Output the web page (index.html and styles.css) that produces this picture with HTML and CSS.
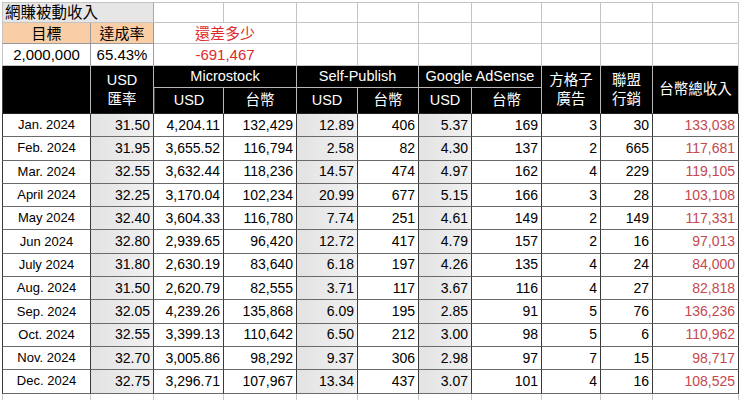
FILE: index.html
```html
<!DOCTYPE html>
<html lang="zh-Hant">
<head>
<meta charset="utf-8">
<link rel="stylesheet" href="styles.css">
</head>
<body>
<table class="sheet">
<colgroup>
<col class="c-a"><col class="c-b"><col class="c-c"><col class="c-d"><col class="c-e"><col class="c-f"><col class="c-g"><col class="c-h"><col class="c-i"><col class="c-j"><col class="c-k">
</colgroup>
<tbody>
<tr class="r-top r-first">
<td colspan="2" class="title">網賺被動收入</td>
<td></td><td></td><td></td><td></td><td></td><td></td><td></td><td></td><td></td>
</tr>
<tr class="r-top r-mid">
<td class="peach">目標</td><td class="peach">達成率</td>
<td colspan="2" class="red">還差多少</td>
<td></td><td></td><td></td><td></td><td></td><td></td><td></td>
</tr>
<tr class="r-top r-mid">
<td class="big">2,000,000</td><td class="big">65.43%</td>
<td colspan="2" class="red">-691,467</td>
<td></td><td></td><td></td><td></td><td></td><td></td><td></td>
</tr>
<tr class="r-head r-ha">
<td rowspan="2"></td>
<td rowspan="2" class="stack"><span>USD</span><span>匯率</span></td>
<td colspan="2">Microstock</td>
<td colspan="2">Self-Publish</td>
<td colspan="2">Google AdSense</td>
<td rowspan="2" class="stack"><span>方格子</span><span>廣告</span></td>
<td rowspan="2" class="stack"><span>聯盟</span><span>行銷</span></td>
<td rowspan="2">台幣總收入</td>
</tr>
<tr class="r-head r-hb">
<td>USD</td><td>台幣</td><td>USD</td><td>台幣</td><td>USD</td><td>台幣</td>
</tr>
<tr class="r-data"><td>Jan. 2024</td><td>31.50</td><td>4,204.11</td><td>132,429</td><td>12.89</td><td>406</td><td>5.37</td><td>169</td><td>3</td><td>30</td><td>133,038</td></tr>
<tr class="r-data"><td>Feb. 2024</td><td>31.95</td><td>3,655.52</td><td>116,794</td><td>2.58</td><td>82</td><td>4.30</td><td>137</td><td>2</td><td>665</td><td>117,681</td></tr>
<tr class="r-data"><td>Mar. 2024</td><td>32.55</td><td>3,632.44</td><td>118,236</td><td>14.57</td><td>474</td><td>4.97</td><td>162</td><td>4</td><td>229</td><td>119,105</td></tr>
<tr class="r-data"><td>April 2024</td><td>32.25</td><td>3,170.04</td><td>102,234</td><td>20.99</td><td>677</td><td>5.15</td><td>166</td><td>3</td><td>28</td><td>103,108</td></tr>
<tr class="r-data"><td>May 2024</td><td>32.40</td><td>3,604.33</td><td>116,780</td><td>7.74</td><td>251</td><td>4.61</td><td>149</td><td>2</td><td>149</td><td>117,331</td></tr>
<tr class="r-data"><td>Jun 2024</td><td>32.80</td><td>2,939.65</td><td>96,420</td><td>12.72</td><td>417</td><td>4.79</td><td>157</td><td>2</td><td>16</td><td>97,013</td></tr>
<tr class="r-data"><td>July 2024</td><td>31.80</td><td>2,630.19</td><td>83,640</td><td>6.18</td><td>197</td><td>4.26</td><td>135</td><td>4</td><td>24</td><td>84,000</td></tr>
<tr class="r-data"><td>Aug. 2024</td><td>31.50</td><td>2,620.79</td><td>82,555</td><td>3.71</td><td>117</td><td>3.67</td><td>116</td><td>4</td><td>27</td><td>82,818</td></tr>
<tr class="r-data"><td>Sep. 2024</td><td>32.05</td><td>4,239.26</td><td>135,868</td><td>6.09</td><td>195</td><td>2.85</td><td>91</td><td>5</td><td>76</td><td>136,236</td></tr>
<tr class="r-data"><td>Oct. 2024</td><td>32.55</td><td>3,399.13</td><td>110,642</td><td>6.50</td><td>212</td><td>3.00</td><td>98</td><td>5</td><td>6</td><td>110,962</td></tr>
<tr class="r-data"><td>Nov. 2024</td><td>32.70</td><td>3,005.86</td><td>98,292</td><td>9.37</td><td>306</td><td>2.98</td><td>97</td><td>7</td><td>15</td><td>98,717</td></tr>
<tr class="r-data"><td>Dec. 2024</td><td>32.75</td><td>3,296.71</td><td>107,967</td><td>13.34</td><td>437</td><td>3.07</td><td>101</td><td>4</td><td>16</td><td>108,525</td></tr>
<tr class="r-blank"><td></td><td></td><td></td><td></td><td></td><td></td><td></td><td></td><td></td><td></td><td></td></tr>
</tbody>
</table>
</body>
</html>
```

FILE: styles.css
```css
html, body {
  margin: 0;
  padding: 0;
  background: #fff;
}
body {
  padding: 2px 0 0 2px;
  font-family: "Liberation Sans", "Noto Sans CJK TC", Arial, sans-serif;
  color: #000;
}
.sheet {
  border-collapse: separate;
  border-spacing: 0;
  table-layout: fixed;
  width: 737px;
}
.c-a { width: 89px; }
.c-b { width: 63px; }
.c-c { width: 70px; }
.c-d { width: 73px; }
.c-e { width: 61px; }
.c-f { width: 61px; }
.c-g { width: 53px; }
.c-h { width: 70px; }
.c-i { width: 59px; }
.c-j { width: 52px; }
.c-k { width: 86px; }

.sheet td {
  padding: 0 3px;
  box-sizing: border-box;
  white-space: nowrap;
  overflow: hidden;
  vertical-align: middle;
  line-height: 1;
}

/* top area */
.r-top td {
  border-right: 1px solid #c4c4c4;
  border-bottom: 1px solid #c4c4c4;
  font-size: 15px;
  text-align: center;
}
.r-top td:first-child { border-left: 1px solid #c4c4c4; }
.r-first td { border-top: 1px solid #c4c4c4; height: 21px; }
.r-mid td { height: 21px; }
.r-mid + .r-mid td { height: 22px; }
.r-top .title {
  background: #e6e6e6;
  text-align: left;
  padding-left: 2px;
  font-size: 15.5px;
  border-right-color: #a8a8a8;
}
.r-top .peach {
  background: #f9cda5;
  border-right-color: #9a9a9a;
  border-bottom-color: #9a9a9a;
}
.r-top .big { border-right-color: #9a9a9a; }
.r-top .red { color: #dd2b2b; }

/* header */
.r-head td {
  background: #000;
  color: #fff;
  text-align: center;
  font-size: 14.5px;
  border-right: 1px solid #b8b8b8;
  border-bottom: 1px solid #b8b8b8;
}
.r-head td:first-child { border-left: 1px solid #444; }
.r-ha td { height: 22px; }
.r-hb td { height: 26px; border-bottom-color: #222; }
.r-ha td[rowspan] { border-bottom-color: #222; }
.stack span {
  display: block;
  line-height: 19px;
}

/* data */
.r-data td {
  height: 23.3px;
  font-size: 14px;
  text-align: right;
  padding: 0 3px 1px 0;
  border-right: 1px solid #3a3a3a;
  border-bottom: 1px solid #6a6a6a;
}
.r-data td:first-child {
  border-left: 1px solid #3a3a3a;
  text-align: center;
  font-size: 13px;
  padding: 0 0 1px 0;
}
.r-data td:nth-child(2),
.r-data td:nth-child(5),
.r-data td:nth-child(7) {
  background: linear-gradient(to right, #e3e3e3, #f1f1f1);
}
.r-data td:nth-child(11) {
  color: #c5484d;
}

.r-blank td {
  height: 10px;
  border-right: 1px solid #c8c8c8;
}
.r-blank td:first-child { border-left: 1px solid #c8c8c8; }
```
